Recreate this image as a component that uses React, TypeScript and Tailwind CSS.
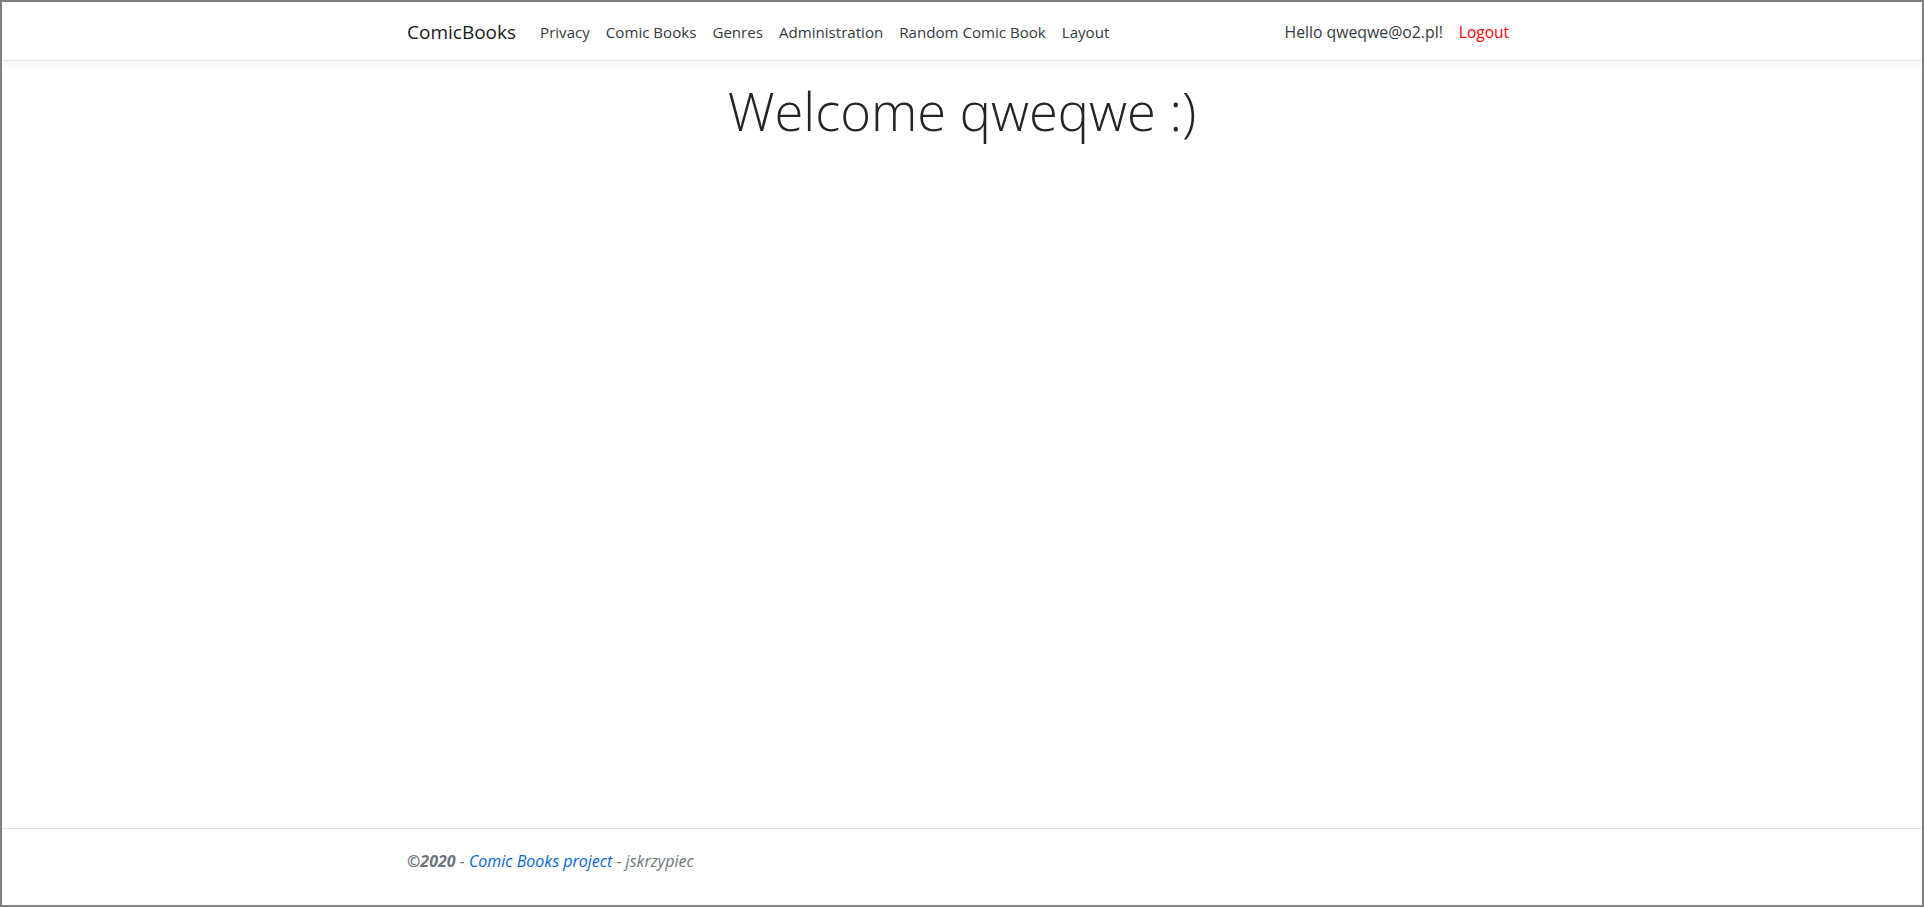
import React from "react";

const links = ["Privacy", "Comic Books", "Genres", "Administration", "Random Comic Book", "Layout"];

function Navbar() {
  return (
    <header className="h-[59px] shrink-0 border-b border-[#e5e5e5] bg-white shadow-[0_4px_12px_rgba(0,0,0,0.05)] relative z-10">
      <div className="w-[1140px] mx-auto px-[15px] h-full flex items-center pt-[2px]">
        <span className="text-[19px] text-[#1a1a1a] mr-4 leading-[30px]">ComicBooks</span>
        <nav className="flex items-center">
          {links.map((l) => (
            <span key={l} className="px-2 text-[15.1px] text-[#343a40] leading-6">
              {l}
            </span>
          ))}
        </nav>
        <div className="ml-auto flex items-center">
          <span className="px-2 text-[15.8px] text-[#343a40] leading-6">Hello qweqwe@o2.pl!</span>
          <span className="px-2 text-[15.5px] text-[#ff0000] leading-6">Logout</span>
        </div>
      </div>
    </header>
  );
}

function Footer() {
  return (
    <footer className="h-[77px] shrink-0 border-t border-[#dee2e6] bg-white">
      <div className="w-[1140px] mx-auto px-[15px] pt-[2px] leading-[60px] text-[16px] text-[#6c757d] italic whitespace-nowrap">
        <b>©2020</b> - <span className="text-[#0366d6]">Comic Books project</span> - jskrzypiec
      </div>
    </footer>
  );
}

export default function App() {
  return (
    <div
      className="h-screen flex flex-col border-2 border-[#808080] bg-white overflow-hidden"
      style={{ fontFamily: '"Open Sans", "Noto Sans", sans-serif' }}
    >
      <Navbar />
      <main className="flex-1 pt-4">
        <div className="w-[1140px] mx-auto px-[15px]">
          <h1 className="text-center text-[52.5px] leading-[1.3] font-light text-[#212529]">Welcome qweqwe :)</h1>
        </div>
      </main>
      <Footer />
    </div>
  );
}
